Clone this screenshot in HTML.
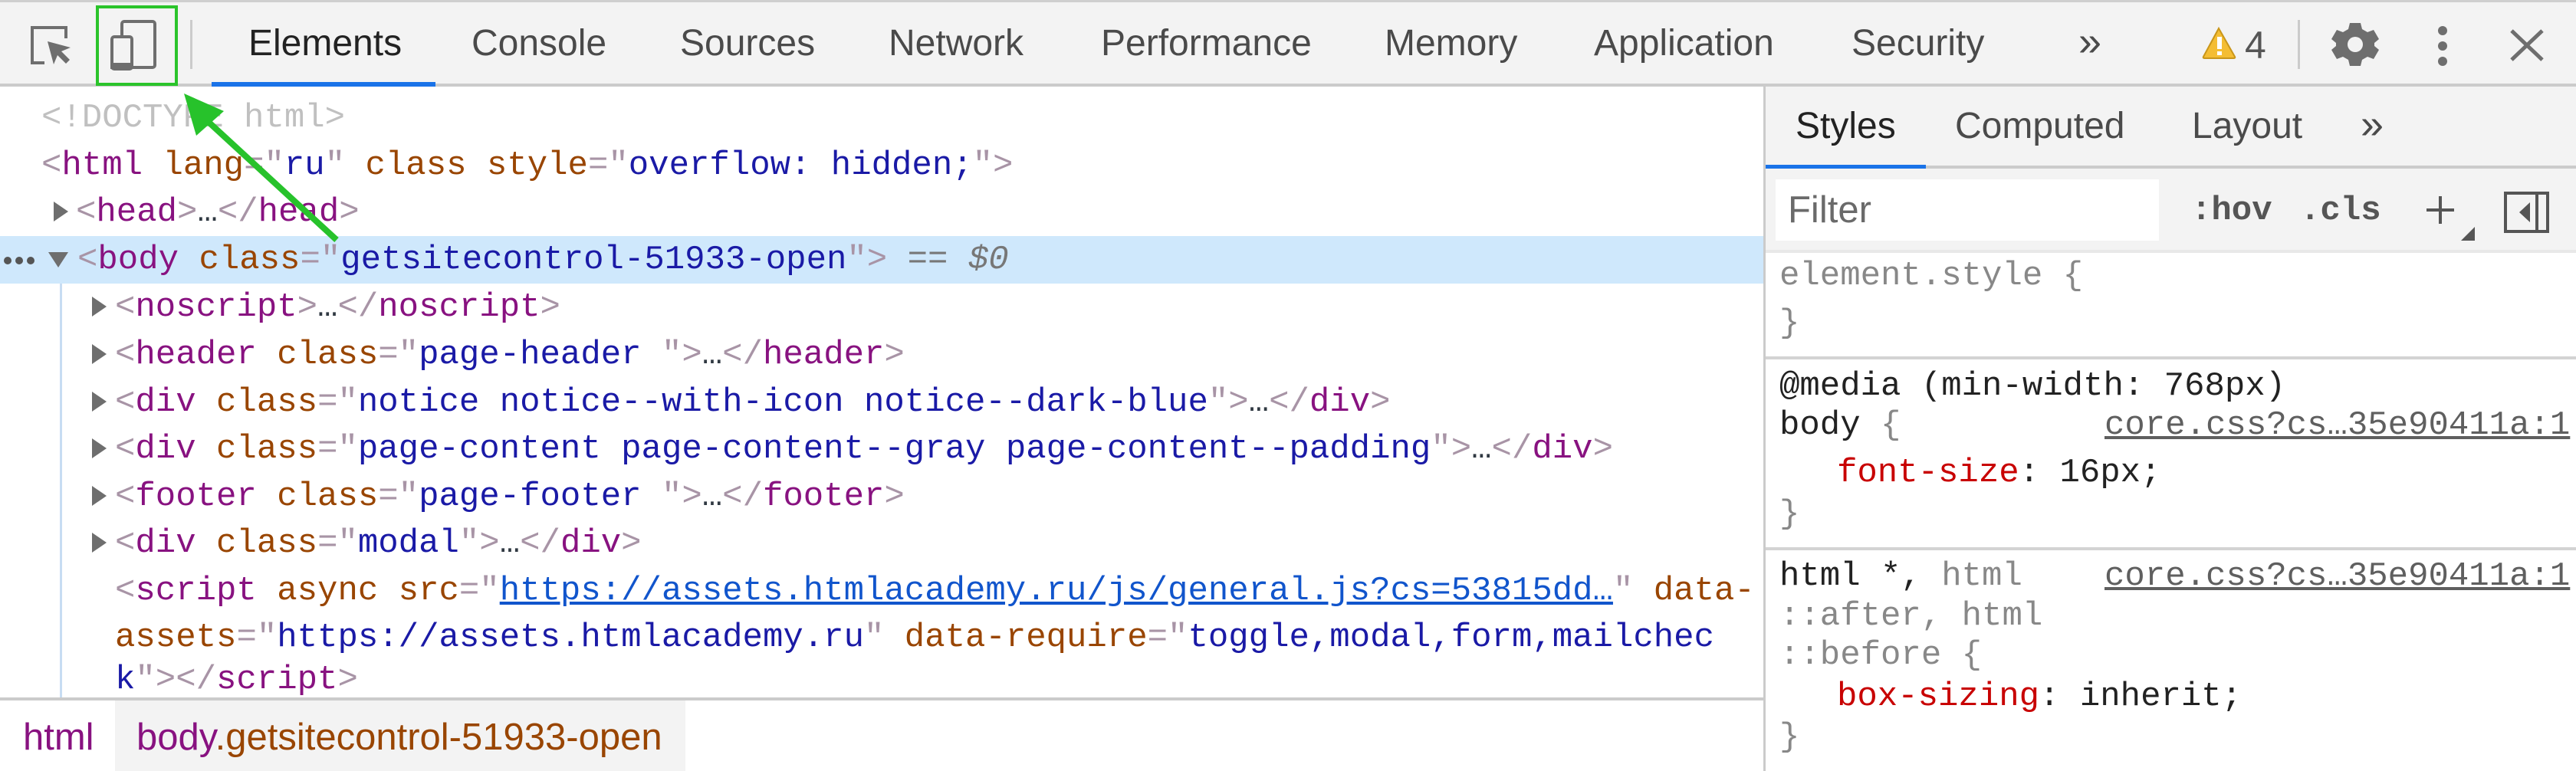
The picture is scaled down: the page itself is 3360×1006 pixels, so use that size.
<!DOCTYPE html>
<html><head><meta charset="utf-8"><style>
*{margin:0;padding:0;box-sizing:border-box}
body{width:3360px;height:1006px;overflow:hidden;background:#fff;position:relative;font-family:"Liberation Sans",sans-serif}
.a{position:absolute}
.m{font-family:"Liberation Mono",monospace;font-size:44px;white-space:pre;height:62px;line-height:62px}
.t{color:#881280}.n{color:#994500}.v{color:#1a1aa6}.p{color:#a894a6}.e{color:#303942}
.tab{position:absolute;top:29px;font-size:48px;line-height:56px;color:#4a4a4a}
.tri{position:absolute;width:0;height:0;border-top:13px solid transparent;border-bottom:13px solid transparent;border-left:19px solid #6e6e6e}
.s{color:#222}.g{color:#888}.r{color:#c80000}.lk{color:#5f5f5f;text-decoration:underline}
</style></head><body>
<div class="a" style="left:0;top:0;width:3360px;height:3px;background:#cfcfcf"></div>
<div class="a" style="left:0;top:3px;width:3360px;height:106px;background:#f3f3f3"></div>
<div class="a" style="left:0;top:109px;width:3360px;height:4px;background:#cbcbcb"></div>
<div class="a" style="left:276px;top:107px;width:292px;height:6px;background:#1a73e8"></div>
<svg class="a" style="left:0;top:0" width="260" height="112">
<path d="M58 82 H42 V36 H86 V50" fill="none" stroke="#6e6e6e" stroke-width="4"/>
<path d="M62 54 L92 62 L80 67 L91 78 L86 83 L75 72 L70 84 Z" fill="#6e6e6e"/>
<rect x="159" y="28" width="43" height="60" rx="3" fill="none" stroke="#6e6e6e" stroke-width="4"/>
<rect x="146" y="48" width="26" height="42" rx="3" fill="#f3f3f3" stroke="#6e6e6e" stroke-width="4"/>
<rect x="144" y="82" width="30" height="8" fill="#6e6e6e"/>
<rect x="127" y="9" width="103" height="101" fill="none" stroke="#2bc42b" stroke-width="4"/>
<rect x="248" y="26" width="3" height="64" fill="#cbcbcb"/>
</svg>
<div class="tab" style="left:324px;color:#222">Elements</div>
<div class="tab" style="left:615px">Console</div>
<div class="tab" style="left:887px">Sources</div>
<div class="tab" style="left:1159px">Network</div>
<div class="tab" style="left:1436px">Performance</div>
<div class="tab" style="left:1806px">Memory</div>
<div class="tab" style="left:2079px">Application</div>
<div class="tab" style="left:2415px">Security</div>
<div class="tab" style="left:2711px;font-size:54px;top:26px">»</div>
<svg class="a" style="left:2860px;top:0" width="500" height="112">
<path d="M34 37 L55 74 Q56 76 53 76 L16 76 Q13 76 14 74 Z" fill="#f4bd33" stroke="#c9961a" stroke-width="2"/>
<rect x="32" y="48" width="6" height="16" fill="#fff"/><rect x="32" y="67" width="6" height="5" fill="#fff"/>
<text x="68" y="76" font-family="Liberation Sans" font-size="50" fill="#555">4</text>
<rect x="137" y="26" width="3" height="64" fill="#cbcbcb"/>
<g transform="translate(212,58)" fill="#6e6e6e">
<path d="M-7 -28 H7 L9 -20 L16 -16 L24 -19 L31 -7 L25 -2 V2 L31 7 L24 19 L16 16 L9 20 L7 28 H-7 L-9 20 L-16 16 L-24 19 L-31 7 L-25 2 V-2 L-31 -7 L-24 -19 L-16 -16 L-9 -20 Z"/>
<circle r="10" fill="#f3f3f3"/></g>
<circle cx="326" cy="40" r="6" fill="#6e6e6e"/><circle cx="326" cy="60" r="6" fill="#6e6e6e"/><circle cx="326" cy="80" r="6" fill="#6e6e6e"/>
<path d="M416 40 L456 78 M456 40 L416 78" stroke="#6e6e6e" stroke-width="5"/>
</svg>
<div class="a" style="left:0;top:308px;width:2301px;height:62px;background:#cfe8fc"></div>
<div class="a" style="left:78px;top:370px;width:3px;height:543px;background:#c7dcf2"></div>
<div class="a m" style="left:54px;top:123px;color:#c0c0c0">&lt;!DOCTYPE html&gt;</div>
<div class="a m" style="left:54px;top:185px"><span class="p">&lt;</span><span class="t">html</span> <span class="n">lang</span><span class="p">="</span><span class="v">ru</span><span class="p">"</span> <span class="n">class style</span><span class="p">="</span><span class="v">overflow: hidden;</span><span class="p">"&gt;</span></div>
<div class="tri" style="left:70px;top:263px"></div>
<div class="a m" style="left:99px;top:246px"><span class="p">&lt;</span><span class="t">head</span><span class="p">&gt;</span><span class="e">…</span><span class="p">&lt;/</span><span class="t">head</span><span class="p">&gt;</span></div>
<svg class="a" style="left:0;top:330px" width="60" height="20"><circle cx="10" cy="10" r="5" fill="#555"/><circle cx="25" cy="10" r="5" fill="#555"/><circle cx="40" cy="10" r="5" fill="#555"/></svg>
<div class="a" style="left:63px;top:329px;width:0;height:0;border-left:13px solid transparent;border-right:13px solid transparent;border-top:20px solid #6e6e6e"></div>
<div class="a m" style="left:101px;top:308px"><span class="p">&lt;</span><span class="t">body</span> <span class="n">class</span><span class="p">="</span><span class="v">getsitecontrol-51933-open</span><span class="p">"&gt;</span> <span style="color:#777">== <i>$0</i></span></div>
<div class="tri" style="left:120px;top:387px"></div>
<div class="a m" style="left:150px;top:370px"><span class="p">&lt;</span><span class="t">noscript</span><span class="p">&gt;</span><span class="e">…</span><span class="p">&lt;/</span><span class="t">noscript</span><span class="p">&gt;</span></div>
<div class="tri" style="left:120px;top:449px"></div>
<div class="a m" style="left:150px;top:432px"><span class="p">&lt;</span><span class="t">header</span> <span class="n">class</span><span class="p">="</span><span class="v">page-header </span><span class="p">"&gt;</span><span class="e">…</span><span class="p">&lt;/</span><span class="t">header</span><span class="p">&gt;</span></div>
<div class="tri" style="left:120px;top:511px"></div>
<div class="a m" style="left:150px;top:494px"><span class="p">&lt;</span><span class="t">div</span> <span class="n">class</span><span class="p">="</span><span class="v">notice notice--with-icon notice--dark-blue</span><span class="p">"&gt;</span><span class="e">…</span><span class="p">&lt;/</span><span class="t">div</span><span class="p">&gt;</span></div>
<div class="tri" style="left:120px;top:572px"></div>
<div class="a m" style="left:150px;top:555px"><span class="p">&lt;</span><span class="t">div</span> <span class="n">class</span><span class="p">="</span><span class="v">page-content page-content--gray page-content--padding</span><span class="p">"&gt;</span><span class="e">…</span><span class="p">&lt;/</span><span class="t">div</span><span class="p">&gt;</span></div>
<div class="tri" style="left:120px;top:634px"></div>
<div class="a m" style="left:150px;top:617px"><span class="p">&lt;</span><span class="t">footer</span> <span class="n">class</span><span class="p">="</span><span class="v">page-footer </span><span class="p">"&gt;</span><span class="e">…</span><span class="p">&lt;/</span><span class="t">footer</span><span class="p">&gt;</span></div>
<div class="tri" style="left:120px;top:695px"></div>
<div class="a m" style="left:150px;top:678px"><span class="p">&lt;</span><span class="t">div</span> <span class="n">class</span><span class="p">="</span><span class="v">modal</span><span class="p">"&gt;</span><span class="e">…</span><span class="p">&lt;/</span><span class="t">div</span><span class="p">&gt;</span></div>
<div class="a m" style="left:150px;top:740px"><span class="p">&lt;</span><span class="t">script</span> <span class="n">async src</span><span class="p">="</span><span style="color:#1155cc;text-decoration:underline">https://assets.htmlacademy.ru/js/general.js?cs=53815dd…</span><span class="p">"</span> <span class="n">data-</span></div>
<div class="a m" style="left:150px;top:801px"><span class="n">assets</span><span class="p">="</span><span class="v">https://assets.htmlacademy.ru</span><span class="p">"</span> <span class="n">data-require</span><span class="p">="</span><span class="v">toggle,modal,form,mailchec</span></div>
<div class="a m" style="left:150px;top:856px"><span class="v">k</span><span class="p">"&gt;&lt;/</span><span class="t">script</span><span class="p">&gt;</span></div>
<svg class="a" style="left:0;top:0" width="500" height="360">
<path d="M439 313 L262 150" stroke="#27c22b" stroke-width="8"/>
<path d="M240 122 L292 145 L256 177 Z" fill="#27c22b"/>
</svg>
<div class="a" style="left:0;top:910px;width:2301px;height:4px;background:#cbcbcb"></div>
<div class="a" style="left:150px;top:914px;width:744px;height:92px;background:#f3f3f3"></div>
<div class="a" style="left:30px;top:934px;font-size:49px;line-height:56px;color:#881280">html</div>
<div class="a" style="left:178px;top:934px;font-size:49px;line-height:56px"><span style="color:#881280">body</span><span style="color:#994500">.getsitecontrol-51933-open</span></div>
<div class="a" style="left:2300px;top:113px;width:3px;height:893px;background:#cbcbcb"></div>
<div class="a" style="left:2303px;top:113px;width:1057px;height:105px;background:#f3f3f3"></div>
<div class="a" style="left:2303px;top:216px;width:1057px;height:4px;background:#cbcbcb"></div>
<div class="a" style="left:2303px;top:215px;width:209px;height:6px;background:#1a73e8"></div>
<div class="tab" style="left:2342px;top:137px;color:#222">Styles</div>
<div class="tab" style="left:2550px;top:137px">Computed</div>
<div class="tab" style="left:2859px;top:137px">Layout</div>
<div class="tab" style="left:3079px;top:134px;font-size:54px">»</div>
<div class="a" style="left:2303px;top:220px;width:1057px;height:108px;background:#f3f3f3"></div>
<div class="a" style="left:2303px;top:326px;width:1057px;height:4px;background:#e8e8e8"></div>
<div class="a" style="left:2316px;top:234px;width:500px;height:80px;background:#fff"></div>
<div class="a" style="left:2332px;top:246px;font-size:49px;line-height:56px;color:#6a6a6a">Filter</div>
<div class="a m" style="left:2858px;top:244px;font-weight:bold;color:#555">:hov</div>
<div class="a m" style="left:3000px;top:244px;font-weight:bold;color:#555">.cls</div>
<svg class="a" style="left:3150px;top:230px" width="200" height="100">
<path d="M33 26 V62 M15 44 H51" stroke="#555" stroke-width="4"/>
<path d="M78 66 L78 84 L60 84 Z" fill="#555"/>
<rect x="118" y="22" width="55" height="50" fill="none" stroke="#555" stroke-width="4"/>
<rect x="157" y="22" width="4" height="50" fill="#555"/>
<path d="M150 34 L150 60 L136 47 Z" fill="#555"/>
</svg>
<div class="a m" style="left:2321px;top:329px;color:#888">element.style {</div>
<div class="a m" style="left:2321px;top:391px;color:#888">}</div>
<div class="a" style="left:2303px;top:465px;width:1057px;height:4px;background:#d3d3d3"></div>
<div class="a m" style="left:2321px;top:473px"><span class="s">@media (min-width: 768px)</span></div>
<div class="a m" style="left:2321px;top:524px"><span class="s">body</span> <span class="g">{</span></div>
<div class="a m lk" style="left:2745px;top:524px">core.css?cs…35e90411a:1</div>
<div class="a m" style="left:2396px;top:586px"><span class="r">font-size</span><span class="s">: 16px;</span></div>
<div class="a m" style="left:2321px;top:640px;color:#888">}</div>
<div class="a" style="left:2303px;top:714px;width:1057px;height:4px;background:#d3d3d3"></div>
<div class="a m" style="left:2321px;top:721px"><span class="s">html *,</span> <span class="g">html</span></div>
<div class="a m lk" style="left:2745px;top:721px">core.css?cs…35e90411a:1</div>
<div class="a m g" style="left:2321px;top:773px">::after, html</div>
<div class="a m g" style="left:2321px;top:824px">::before {</div>
<div class="a m" style="left:2396px;top:878px"><span class="r">box-sizing</span><span class="s">: inherit;</span></div>
<div class="a m" style="left:2321px;top:931px;color:#888">}</div>
</body></html>
